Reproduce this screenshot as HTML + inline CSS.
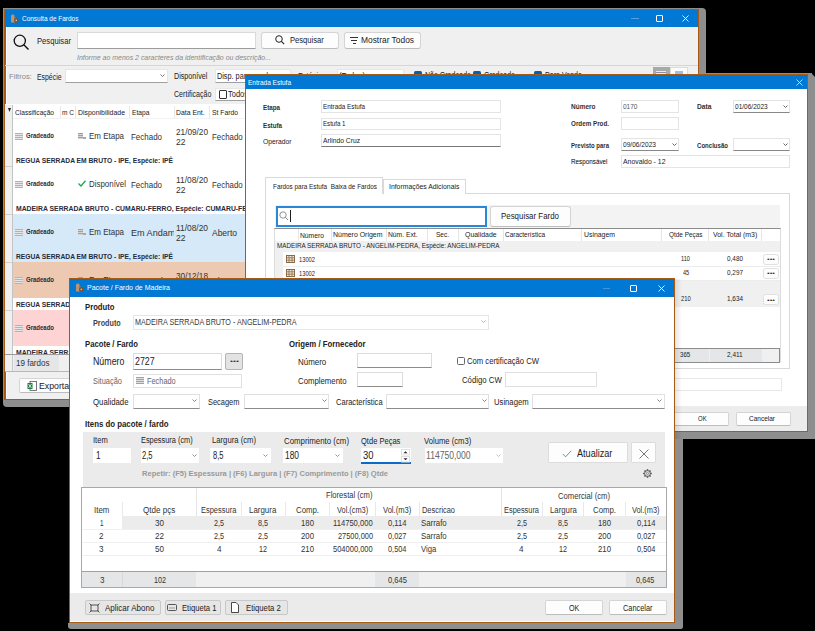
<!DOCTYPE html>
<html><head><meta charset="utf-8">
<style>
*{box-sizing:border-box}
html,body{margin:0;padding:0}
body{width:815px;height:631px;background:#000;position:relative;overflow:hidden;font-family:"Liberation Sans",sans-serif;color:#1a1a1a}
.a{position:absolute}
.t{position:absolute;white-space:nowrap;transform-origin:0 0}
.win{position:absolute;overflow:hidden;border:1px solid #a65a14}
.pc{position:absolute;left:0;top:0;width:815px;height:631px}
.sh{position:absolute;background:#8e8e8e}
.tb{position:absolute;background:#0078d4}
.inp{position:absolute;background:#fff;border:1px solid #e0e0e0;border-bottom-color:#8c8c8c}
.btn{position:absolute;background:#fdfdfd;border:1px solid #d4d4d4;border-bottom-color:#bdbdbd;border-radius:3px}
</style></head><body>

<div class="sh" style="left:699px;top:8px;width:7px;height:399px;border-radius:0 4px 4px 0"></div>
<div class="sh" style="left:3px;top:400px;width:703px;height:7px;border-radius:0 0 4px 4px"></div>
<div class="sh" style="left:3px;top:8px;width:696px;height:1px"></div>
<div class="sh" style="left:3px;top:8px;width:1px;height:392px"></div>
<div class="win" style="left:4px;top:9px;width:695px;height:391px;background:#f0f0f0"><div class="pc" style="left:-5px;top:-10px">
<div class="a" style="left:5px;top:10px;width:693px;height:17px;background:#0078d4"></div>
<div class="a" style="left:5px;top:27px;width:1px;height:372px;background:#8c6038"></div>
<div class="a" style="left:6px;top:27px;width:1px;height:372px;background:#fafcff"></div>
<svg class="a" style="left:10px;top:14px" width="9" height="9" viewBox="0 0 9 9"><path d="M1 8.5 V2 Q1 0.5 2.5 0.5 H3.5 Q4.5 0.5 4.5 2 V8.5 Z" fill="#b89470"></path><rect x="4" y="3" width="1.5" height="5.5" fill="#a07a55"></rect><circle cx="6.3" cy="6.4" r="2.3" fill="#7a5232"></circle><circle cx="6.3" cy="6.4" r="0.8" fill="#d8c0a0"></circle></svg>
<div class="t" style="left: 22.2px; top: 12.5px; font-size: 7.2px; line-height: 12px; height: 12px; --w: 56.4; color: rgb(255, 255, 255); transform: scaleX(0.899); transform-origin: 0px 0px;">Consulta de Fardos</div>
<div class="a" style="left:631px;top:18px;width:8px;height:1px;background:#5a9ede"></div>
<div class="a" style="left:656px;top:15px;width:6.5px;height:6.5px;border:1px solid #fff;border-radius:1px"></div>
<svg class="a" style="left:681.5px;top:14.5px" width="7" height="7" viewBox="0 0 7 7"><path d="M0.5 0.5 L6.5 6.5 M6.5 0.5 L0.5 6.5" stroke="#fff" stroke-width="0.9"></path></svg>
<svg class="a" style="left:13px;top:34px" width="17" height="17" viewBox="0 0 17 17"><circle cx="6.8" cy="6.8" r="5.6" fill="none" stroke="#111" stroke-width="1.3"></circle><line x1="10.8" y1="10.8" x2="15.5" y2="15.5" stroke="#111" stroke-width="1.4"></line></svg>
<div class="t" style="left: 36.9px; top: 34.6px; font-size: 9px; line-height: 12px; height: 12px; --w: 34; color: rgb(34, 34, 34); transform: scaleX(0.8493); transform-origin: 0px 0px;">Pesquisar</div>
<div class="inp" style="left:77px;top:32px;width:179px;height:17px;border-color:#dadada;border-bottom-color:#9c9c9c"></div>
<div class="t" style="left: 77.4px; top: 51.8px; font-size: 8px; line-height: 12px; height: 12px; --w: 194; color: rgb(136, 136, 136); font-style: italic; transform: scaleX(0.8707); transform-origin: 0px 0px;">Informe ao menos 2 caracteres da identificação ou descrição...</div>
<div class="btn" style="left:261px;top:32px;width:78px;height:17px;"></div>
<svg class="a" style="left:275px;top:35px" width="10" height="10" viewBox="0 0 10 10"><circle cx="4" cy="4" r="3.3" fill="none" stroke="#222" stroke-width="1"></circle><line x1="6.4" y1="6.4" x2="9.2" y2="9.2" stroke="#222" stroke-width="1.1"></line></svg>
<div class="t" style="left: 289.7px; top: 33.8px; font-size: 9px; line-height: 12px; height: 12px; --w: 33.8; color: rgb(34, 34, 34); transform: scaleX(0.8443); transform-origin: 0px 0px;">Pesquisar</div>
<div class="btn" style="left:344px;top:32px;width:77px;height:17px;"></div>
<div class="a" style="left:350px;top:37px;width:8px;height:1px;background:#333"></div>
<div class="a" style="left:351px;top:40px;width:6px;height:1px;background:#333"></div>
<div class="a" style="left:353px;top:43px;width:3px;height:1px;background:#333"></div>
<div class="t" style="left: 360.8px; top: 33.8px; font-size: 9px; line-height: 12px; height: 12px; --w: 53; color: rgb(34, 34, 34); transform: scaleX(0.9321); transform-origin: 0px 0px;">Mostrar Todos</div>
<div class="a" style="left:5px;top:65px;width:693px;height:1px;background:#d6d6d6"></div>
<div class="t" style="left: 8.6px; top: 70.9px; font-size: 8px; line-height: 12px; height: 12px; --w: 23; color: rgb(138, 138, 138); transform: scaleX(0.9583); transform-origin: 0px 0px;">Filtros:</div>
<div class="t" style="left: 36.8px; top: 70.9px; font-size: 8.5px; line-height: 12px; height: 12px; --w: 24.5; color: rgb(34, 34, 34); transform: scaleX(0.8099); transform-origin: 0px 0px;">Espécie</div>
<div class="inp" style="left:65px;top:69px;width:103px;height:14px;border-color:#e6e6e6;border-bottom-color:#a0a0a0"></div>
<svg class="a" style="left:159.5px;top:74.0px" width="5" height="4.0" viewBox="0 0 5 4.0"><path d="M0.5 0.5 L2.5 2.5 L4.5 0.5" fill="none" stroke="#666" stroke-width="0.9"></path></svg>
<div class="t" style="left: 173.6px; top: 70.2px; font-size: 8.5px; line-height: 12px; height: 12px; --w: 33.4; color: rgb(34, 34, 34); transform: scaleX(0.8416); transform-origin: 0px 0px;">Disponível</div>
<div class="inp" style="left:215px;top:69px;width:76px;height:14px;border-color:#e6e6e6;border-bottom-color:#a0a0a0"></div>
<div class="t" style="left: 216.6px; top: 70px; font-size: 8.5px; line-height: 12px; height: 12px; --w: 55; color: rgb(34, 34, 34); transform: scaleX(0.8558); transform-origin: 0px 0px;">Disp. para venda</div>
<div class="t" style="left: 298px; top: 70px; font-size: 8.5px; line-height: 12px; height: 12px; --w: 24; color: rgb(34, 34, 34); transform: scaleX(0.8463); transform-origin: 0px 0px;">Estágio</div>
<div class="inp" style="left:337px;top:69px;width:67px;height:14px;border-color:#e6e6e6;border-bottom-color:#a0a0a0"></div>
<div class="t" style="left: 339px; top: 70px; font-size: 8.5px; line-height: 12px; height: 12px; --w: 26; color: rgb(34, 34, 34); transform: scaleX(0.9173); transform-origin: 0px 0px;">(Todos)</div>
<div class="a" style="left:414px;top:71px;width:8px;height:8px;background:#0060b8;border-radius:1.5px"></div>
<div class="t" style="left: 425px; top: 69px; font-size: 8.5px; line-height: 12px; height: 12px; --w: 46; color: rgb(34, 34, 34); transform: scaleX(0.8249); transform-origin: 0px 0px;">Não Gradeado</div>
<div class="a" style="left:473px;top:71px;width:8px;height:8px;background:#0060b8;border-radius:1.5px"></div>
<div class="t" style="left: 484px; top: 69px; font-size: 8.5px; line-height: 12px; height: 12px; --w: 31; color: rgb(34, 34, 34); transform: scaleX(0.8198); transform-origin: 0px 0px;">Gradeado</div>
<div class="a" style="left:534px;top:71px;width:8px;height:8px;background:#0060b8;border-radius:1.5px"></div>
<div class="t" style="left: 545px; top: 69px; font-size: 8.5px; line-height: 12px; height: 12px; --w: 37; color: rgb(34, 34, 34); transform: scaleX(0.8326); transform-origin: 0px 0px;">Para Venda</div>
<div class="a" style="left:653px;top:67px;width:17px;height:17px;background:#a9a9a9"></div>
<div class="a" style="left:656px;top:71px;width:10px;height:8px;background:repeating-linear-gradient(180deg,#e8e8f0 0 1px,#8890a8 1px 2px)"></div>
<div class="a" style="left:670px;top:67px;width:18px;height:17px;background:#fbfbfb;border:1px solid #dcdcdc"></div>
<div class="a" style="left:675px;top:71px;width:8px;height:8px;background:#9cc0e8"></div>
<div class="t" style="left: 173.6px; top: 88.4px; font-size: 8.5px; line-height: 12px; height: 12px; --w: 37.4; color: rgb(34, 34, 34); transform: scaleX(0.8331); transform-origin: 0px 0px;">Certificação</div>
<div class="inp" style="left:215px;top:88px;width:65px;height:13px;border-color:#e6e6e6;border-bottom-color:#a0a0a0"></div>
<div class="a" style="left:219px;top:90px;width:8px;height:9px;border:1px solid #333;border-radius:1px;background:#fff"></div>
<div class="t" style="left: 228.2px; top: 88.4px; font-size: 8.5px; line-height: 12px; height: 12px; --w: 20; color: rgb(34, 34, 34); transform: scaleX(0.8815); transform-origin: 0px 0px;">Todos</div>
<div class="a" style="left:5px;top:104px;width:693px;height:250px;background:#fff"></div>
<div class="a" style="left:5px;top:105px;width:7px;height:249px;background:#f0f0f0"></div>
<div class="a" style="left:12px;top:105px;width:1px;height:249px;background:#c4c4c4"></div>
<div class="a" style="left:60px;top:106px;width:1px;height:12px;background:#e8e8e8"></div>
<div class="a" style="left:75px;top:106px;width:1px;height:12px;background:#e8e8e8"></div>
<div class="a" style="left:129px;top:106px;width:1px;height:12px;background:#e8e8e8"></div>
<div class="a" style="left:174px;top:106px;width:1px;height:12px;background:#e8e8e8"></div>
<div class="a" style="left:209px;top:106px;width:1px;height:12px;background:#e8e8e8"></div>
<div class="a" style="left:13px;top:118px;width:685px;height:1px;background:#f2f2f2"></div>
<svg class="a" style="left:8px;top:108px" width="3" height="5" viewBox="0 0 3 5"><path d="M0 0 H3 L1.5 4 Z" fill="#222"></path></svg>
<div class="t" style="left: 14.6px; top: 106.6px; font-size: 7.5px; line-height: 12px; height: 12px; --w: 39; color: rgb(26, 26, 42); transform: scaleX(0.8826); transform-origin: 0px 0px;">Classificação</div>
<div class="t" style="left: 61.7px; top: 106.6px; font-size: 7.5px; line-height: 12px; height: 12px; --w: 12; color: rgb(26, 26, 42); transform: scaleX(0.8727); transform-origin: 0px 0px;">m C</div>
<div class="t" style="left: 77.6px; top: 106.6px; font-size: 7.5px; line-height: 12px; height: 12px; --w: 47; color: rgb(26, 26, 42); transform: scaleX(0.9238); transform-origin: 0px 0px;">Disponibilidade</div>
<div class="t" style="left: 132px; top: 106.6px; font-size: 7.5px; line-height: 12px; height: 12px; --w: 17.4; color: rgb(26, 26, 42); transform: scaleX(0.8873); transform-origin: 0px 0px;">Etapa</div>
<div class="t" style="left: 176.4px; top: 106.6px; font-size: 7.5px; line-height: 12px; height: 12px; --w: 28.6; color: rgb(26, 26, 42); transform: scaleX(0.9143); transform-origin: 0px 0px;">Data Ent.</div>
<div class="t" style="left: 211.7px; top: 106.6px; font-size: 7.5px; line-height: 12px; height: 12px; --w: 26; color: rgb(26, 26, 42); transform: scaleX(0.9039); transform-origin: 0px 0px;">St Fardo</div>
<div class="a" style="left:5px;top:166px;width:7px;height:1px;background:#d0d0d0"></div>
<div class="a" style="left:15px;top:133px;width:8px;height:7px;background:repeating-linear-gradient(180deg,#b4b4b4 0 1px,#e4e4e4 1px 2px)"></div>
<div class="t" style="left: 26px; top: 130.3px; font-size: 7.3px; line-height: 12px; height: 12px; --w: 28; font-weight: bold; color: rgb(42, 42, 58); transform: scaleX(0.822); transform-origin: 0px 0px;">Gradeado</div>
<div class="a" style="left:78px;top:133px;width:5px;height:6px;background:repeating-linear-gradient(180deg,#a0a0a0 0 1px,#d4d4d4 1px 2px)"></div>
<div class="a" style="left:83px;top:137px;width:3px;height:2px;background:#a8a8a8"></div>
<div class="t" style="left: 89px; top: 130.4px; font-size: 9px; line-height: 12px; height: 12px; --w: 35; color: rgb(51, 51, 51); transform: scaleX(0.8854); transform-origin: 0px 0px;">Em Etapa</div>
<div class="a" style="left:131px;top:129px;width:43px;height:14px;overflow:hidden">
<div class="t" style="left: 0px; top: 1.5px; font-size: 9px; line-height: 12px; height: 12px; --w: 31; color: rgb(51, 51, 51); transform: scaleX(0.8849); transform-origin: 0px 0px;">Fechado</div>
</div>
<div class="t" style="left: 175.8px; top: 125.5px; font-size: 9px; line-height: 12px; height: 12px; --w: 32; color: rgb(51, 51, 51); transform: scaleX(0.9131); transform-origin: 0px 0px;">21/09/20</div>
<div class="t" style="left: 175.8px; top: 136px; font-size: 9px; line-height: 12px; height: 12px; --w: 9.5; color: rgb(51, 51, 51); transform: scaleX(0.9485); transform-origin: 0px 0px;">22</div>
<div class="t" style="left: 211.6px; top: 130.5px; font-size: 9px; line-height: 12px; height: 12px; --w: 30.7; color: rgb(51, 51, 51); transform: scaleX(0.8764); transform-origin: 0px 0px;">Fechado</div>
<div class="t" style="left: 16px; top: 154.7px; font-size: 7.3px; line-height: 12px; height: 12px; --w: 157; font-weight: bold; color: rgb(42, 42, 58); transform: scaleX(0.919); transform-origin: 0px 0px;">REGUA SERRADA EM BRUTO - IPE, Espécie: IPÊ</div>
<div class="a" style="left:5px;top:214px;width:7px;height:1px;background:#d0d0d0"></div>
<div class="a" style="left:15px;top:181px;width:8px;height:7px;background:repeating-linear-gradient(180deg,#b4b4b4 0 1px,#e4e4e4 1px 2px)"></div>
<div class="t" style="left: 26px; top: 178.3px; font-size: 7.3px; line-height: 12px; height: 12px; --w: 28; font-weight: bold; color: rgb(42, 42, 58); transform: scaleX(0.822); transform-origin: 0px 0px;">Gradeado</div>
<svg class="a" style="left:78px;top:180px" width="8" height="7" viewBox="0 0 8 7"><path d="M0.5 3.5 L3 6 L7.5 0.8" fill="none" stroke="#1aa84a" stroke-width="1.3"></path></svg>
<div class="t" style="left: 89px; top: 178.4px; font-size: 9px; line-height: 12px; height: 12px; --w: 37; color: rgb(51, 51, 51); transform: scaleX(0.8803); transform-origin: 0px 0px;">Disponível</div>
<div class="a" style="left:131px;top:177px;width:43px;height:14px;overflow:hidden">
<div class="t" style="left: 0px; top: 1.5px; font-size: 9px; line-height: 12px; height: 12px; --w: 31; color: rgb(51, 51, 51); transform: scaleX(0.8849); transform-origin: 0px 0px;">Fechado</div>
</div>
<div class="t" style="left: 175.8px; top: 173.5px; font-size: 9px; line-height: 12px; height: 12px; --w: 32; color: rgb(51, 51, 51); transform: scaleX(0.9309); transform-origin: 0px 0px;">11/08/20</div>
<div class="t" style="left: 175.8px; top: 184px; font-size: 9px; line-height: 12px; height: 12px; --w: 9.5; color: rgb(51, 51, 51); transform: scaleX(0.9485); transform-origin: 0px 0px;">22</div>
<div class="t" style="left: 211.6px; top: 178.5px; font-size: 9px; line-height: 12px; height: 12px; --w: 30.7; color: rgb(51, 51, 51); transform: scaleX(0.8764); transform-origin: 0px 0px;">Fechado</div>
<div class="t" style="left: 16px; top: 202.7px; font-size: 7.3px; line-height: 12px; height: 12px; --w: 246; font-weight: bold; color: rgb(42, 42, 58); transform: scaleX(0.936); transform-origin: 0px 0px;">MADEIRA SERRADA BRUTO - CUMARU-FERRO, Espécie: CUMARU-FERRO</div>
<div class="a" style="left:13px;top:214px;width:685px;height:48px;background:#d5e9f8"></div>
<div class="a" style="left:5px;top:262px;width:7px;height:1px;background:#d0d0d0"></div>
<div class="a" style="left:15px;top:229px;width:8px;height:7px;background:repeating-linear-gradient(180deg,#b4b4b4 0 1px,#e4e4e4 1px 2px)"></div>
<div class="t" style="left: 26px; top: 226.3px; font-size: 7.3px; line-height: 12px; height: 12px; --w: 28; font-weight: bold; color: rgb(42, 42, 58); transform: scaleX(0.822); transform-origin: 0px 0px;">Gradeado</div>
<div class="a" style="left:78px;top:229px;width:5px;height:6px;background:repeating-linear-gradient(180deg,#a0a0a0 0 1px,#d4d4d4 1px 2px)"></div>
<div class="a" style="left:83px;top:233px;width:3px;height:2px;background:#a8a8a8"></div>
<div class="t" style="left: 89px; top: 226.4px; font-size: 9px; line-height: 12px; height: 12px; --w: 35; color: rgb(51, 51, 51); transform: scaleX(0.8854); transform-origin: 0px 0px;">Em Etapa</div>
<div class="a" style="left:131px;top:225px;width:43px;height:14px;overflow:hidden">
<div class="t" style="left: 0px; top: 1.5px; font-size: 9px; line-height: 12px; height: 12px; --w: 62; color: rgb(51, 51, 51); transform: scaleX(1.0074); transform-origin: 0px 0px;">Em Andamento</div>
</div>
<div class="t" style="left: 175.8px; top: 221.5px; font-size: 9px; line-height: 12px; height: 12px; --w: 32; color: rgb(51, 51, 51); transform: scaleX(0.9309); transform-origin: 0px 0px;">11/08/20</div>
<div class="t" style="left: 175.8px; top: 232px; font-size: 9px; line-height: 12px; height: 12px; --w: 9.5; color: rgb(51, 51, 51); transform: scaleX(0.9485); transform-origin: 0px 0px;">22</div>
<div class="t" style="left: 211.6px; top: 226.5px; font-size: 9px; line-height: 12px; height: 12px; --w: 25; color: rgb(51, 51, 51); transform: scaleX(0.9423); transform-origin: 0px 0px;">Aberto</div>
<div class="t" style="left: 16px; top: 250.7px; font-size: 7.3px; line-height: 12px; height: 12px; --w: 157; font-weight: bold; color: rgb(42, 42, 58); transform: scaleX(0.919); transform-origin: 0px 0px;">REGUA SERRADA EM BRUTO - IPE, Espécie: IPÊ</div>
<div class="a" style="left:13px;top:262px;width:685px;height:36px;background:#edc9b2"></div>
<div class="a" style="left:5px;top:310px;width:7px;height:1px;background:#d0d0d0"></div>
<div class="a" style="left:15px;top:277px;width:8px;height:7px;background:repeating-linear-gradient(180deg,#b4b4b4 0 1px,#e4e4e4 1px 2px)"></div>
<div class="t" style="left: 26px; top: 274.3px; font-size: 7.3px; line-height: 12px; height: 12px; --w: 28; font-weight: bold; color: rgb(42, 42, 58); transform: scaleX(0.822); transform-origin: 0px 0px;">Gradeado</div>
<div class="a" style="left:78px;top:277px;width:5px;height:6px;background:repeating-linear-gradient(180deg,#a0a0a0 0 1px,#d4d4d4 1px 2px)"></div>
<div class="a" style="left:83px;top:281px;width:3px;height:2px;background:#a8a8a8"></div>
<div class="t" style="left: 89px; top: 274.4px; font-size: 9px; line-height: 12px; height: 12px; --w: 35; color: rgb(51, 51, 51); transform: scaleX(0.8854); transform-origin: 0px 0px;">Em Etapa</div>
<div class="a" style="left:131px;top:273px;width:43px;height:14px;overflow:hidden">
<div class="t" style="left: 0px; top: 1.5px; font-size: 9px; line-height: 12px; height: 12px; --w: 62; color: rgb(51, 51, 51); transform: scaleX(1.0074); transform-origin: 0px 0px;">Em Andamento</div>
</div>
<div class="t" style="left: 175.8px; top: 269.5px; font-size: 9px; line-height: 12px; height: 12px; --w: 32; color: rgb(51, 51, 51); transform: scaleX(0.9131); transform-origin: 0px 0px;">30/12/18</div>
<div class="t" style="left: 175.8px; top: 280px; font-size: 9px; line-height: 12px; height: 12px; --w: 9.5; color: rgb(51, 51, 51); transform: scaleX(0.9485); transform-origin: 0px 0px;">22</div>
<div class="t" style="left: 211.6px; top: 274.5px; font-size: 9px; line-height: 12px; height: 12px; --w: 25; color: rgb(51, 51, 51); transform: scaleX(0.9423); transform-origin: 0px 0px;">Aberto</div>
<div class="t" style="left: 16px; top: 298.7px; font-size: 7.3px; line-height: 12px; height: 12px; --w: 157; font-weight: bold; color: rgb(42, 42, 58); transform: scaleX(0.919); transform-origin: 0px 0px;">REGUA SERRADA EM BRUTO - IPE, Espécie: IPÊ</div>
<div class="a" style="left:13px;top:310px;width:685px;height:36px;background:#fdd3d3"></div>
<div class="a" style="left:5px;top:358px;width:7px;height:1px;background:#d0d0d0"></div>
<div class="a" style="left:15px;top:325px;width:8px;height:7px;background:repeating-linear-gradient(180deg,#b4b4b4 0 1px,#e4e4e4 1px 2px)"></div>
<div class="t" style="left: 26px; top: 322.3px; font-size: 7.3px; line-height: 12px; height: 12px; --w: 28; font-weight: bold; color: rgb(42, 42, 58); transform: scaleX(0.822); transform-origin: 0px 0px;">Gradeado</div>
<div class="a" style="left:78px;top:325px;width:5px;height:6px;background:repeating-linear-gradient(180deg,#a0a0a0 0 1px,#d4d4d4 1px 2px)"></div>
<div class="a" style="left:83px;top:329px;width:3px;height:2px;background:#a8a8a8"></div>
<div class="t" style="left: 89px; top: 322.4px; font-size: 9px; line-height: 12px; height: 12px; --w: 35; color: rgb(51, 51, 51); transform: scaleX(0.8854); transform-origin: 0px 0px;">Em Etapa</div>
<div class="a" style="left:131px;top:321px;width:43px;height:14px;overflow:hidden">
<div class="t" style="left: 0px; top: 1.5px; font-size: 9px; line-height: 12px; height: 12px; --w: 62; color: rgb(51, 51, 51); transform: scaleX(1.0074); transform-origin: 0px 0px;">Em Andamento</div>
</div>
<div class="t" style="left: 175.8px; top: 317.5px; font-size: 9px; line-height: 12px; height: 12px; --w: 32; color: rgb(51, 51, 51); transform: scaleX(0.9131); transform-origin: 0px 0px;">30/12/18</div>
<div class="t" style="left: 175.8px; top: 328px; font-size: 9px; line-height: 12px; height: 12px; --w: 9.5; color: rgb(51, 51, 51); transform: scaleX(0.9485); transform-origin: 0px 0px;">22</div>
<div class="t" style="left: 211.6px; top: 322.5px; font-size: 9px; line-height: 12px; height: 12px; --w: 25; color: rgb(51, 51, 51); transform: scaleX(0.9423); transform-origin: 0px 0px;">Aberto</div>
<div class="t" style="left: 16px; top: 346.7px; font-size: 7.3px; line-height: 12px; height: 12px; --w: 246; font-weight: bold; color: rgb(42, 42, 58); transform: scaleX(0.936); transform-origin: 0px 0px;">MADEIRA SERRADA BRUTO - CUMARU-FERRO, Espécie: CUMARU-FERRO</div>
<div class="a" style="left:5px;top:354px;width:693px;height:1px;background:#9a9a9a"></div>
<div class="a" style="left:5px;top:355px;width:693px;height:16px;background:#f0f0f0"></div>
<div class="a" style="left:12px;top:355px;width:1px;height:16px;background:#c8c8c8"></div>
<div class="a" style="left:14px;top:355px;width:45px;height:16px;background:#e4e6e8"></div>
<div class="t" style="left: 15.5px; top: 357.3px; font-size: 8.7px; line-height: 12px; height: 12px; --w: 33.5; color: rgb(51, 51, 51); transform: scaleX(0.9245); transform-origin: 0px 0px;">19 fardos</div>
<div class="a" style="left:5px;top:371px;width:693px;height:1px;background:#b8b8b8"></div>
<div class="btn" style="left:19px;top:378px;width:71px;height:15px;border-radius:2px"></div>
<svg class="a" style="left:27px;top:381px" width="10" height="10" viewBox="0 0 10 10"><rect x="3" y="0.5" width="6.5" height="9" fill="#fff" stroke="#555" stroke-width="0.8"></rect><rect x="0.5" y="2" width="5" height="6" fill="#1d7a45"></rect><path d="M1.5 3 L4.5 7 M4.5 3 L1.5 7" stroke="#fff" stroke-width="0.8"></path></svg>
<div class="t" style="left: 38.5px; top: 379.7px; font-size: 9px; line-height: 12px; height: 12px; --w: 33; color: rgb(26, 26, 42); transform: scaleX(0.9701); transform-origin: 0px 0px;">Exportar</div>
</div></div>
<div class="sh" style="left:808px;top:74px;width:7px;height:365px;clip-path:polygon(0 0,4px 0,7px 3px,7px 100%,0 100%)"></div>
<div class="sh" style="left:706px;top:73px;width:106px;height:1px"></div>
<div class="sh" style="left:244px;top:432px;width:571px;height:7px;border-radius:0 0 3px 0"></div>
<div class="win" style="left:245px;top:74px;width:563px;height:358px;background:#fff"><div class="pc" style="left:-246px;top:-75px">
<div class="a" style="left:246px;top:75px;width:561px;height:14px;background:#0078d4"></div>
<div class="t" style="left: 247.6px; top: 76.5px; font-size: 8px; line-height: 12px; height: 12px; --w: 43; color: rgb(255, 255, 255); transform: scaleX(0.8125); transform-origin: 0px 0px;">Entrada Estufa</div>
<svg class="a" style="left:795.5px;top:78.8px" width="7" height="7" viewBox="0 0 7 7"><path d="M0.5 0.5 L6.5 6.5 M6.5 0.5 L0.5 6.5" stroke="#e8f0fa" stroke-width="0.8"></path></svg>
<div class="t" style="left: 263px; top: 101.6px; font-size: 7.5px; line-height: 12px; height: 12px; --w: 17; font-weight: bold; color: rgb(48, 48, 48); transform: scaleX(0.8318); transform-origin: 0px 0px;">Etapa</div>
<div class="t" style="left: 263px; top: 119.8px; font-size: 7.5px; line-height: 12px; height: 12px; --w: 19; font-weight: bold; color: rgb(48, 48, 48); transform: scaleX(0.8289); transform-origin: 0px 0px;">Estufa</div>
<div class="t" style="left: 263px; top: 135.8px; font-size: 7.5px; line-height: 12px; height: 12px; --w: 28.5; color: rgb(26, 26, 26); transform: scaleX(0.8994); transform-origin: 0px 0px;">Operador</div>
<div class="inp" style="left:321px;top:100px;width:180px;height:13px;border-color:#e4e4e4;border-bottom-color:#e4e4e4"></div>
<div class="t" style="left: 323px; top: 100.5px; font-size: 7.5px; line-height: 12px; height: 12px; --w: 42; color: rgb(26, 26, 26); transform: scaleX(0.8463); transform-origin: 0px 0px;">Entrada Estufa</div>
<div class="inp" style="left:321px;top:118px;width:180px;height:12px;border-color:#e4e4e4;border-bottom-color:#e4e4e4"></div>
<div class="t" style="left: 323px; top: 118px; font-size: 7.5px; line-height: 12px; height: 12px; --w: 22.5; color: rgb(26, 26, 26); transform: scaleX(0.8173); transform-origin: 0px 0px;">Estufa 1</div>
<div class="inp" style="left:321px;top:134px;width:180px;height:13px;border-color:#e4e4e4;border-bottom-color:#777"></div>
<div class="t" style="left: 323px; top: 134.5px; font-size: 7.5px; line-height: 12px; height: 12px; --w: 37; color: rgb(26, 26, 26); transform: scaleX(0.8966); transform-origin: 0px 0px;">Arlindo Cruz</div>
<div class="t" style="left: 571px; top: 101.2px; font-size: 7.5px; line-height: 12px; height: 12px; --w: 24.5; font-weight: bold; color: rgb(48, 48, 48); transform: scaleX(0.8644); transform-origin: 0px 0px;">Número</div>
<div class="inp" style="left:621px;top:100px;width:58px;height:13px;border-color:#e4e4e4;border-bottom-color:#e4e4e4"></div>
<div class="t" style="left: 623px; top: 101.2px; font-size: 7.5px; line-height: 12px; height: 12px; --w: 14.5; color: rgb(85, 85, 85); transform: scaleX(0.8689); transform-origin: 0px 0px;">0170</div>
<div class="t" style="left: 697px; top: 101.2px; font-size: 7.5px; line-height: 12px; height: 12px; --w: 14.5; font-weight: bold; color: rgb(48, 48, 48); transform: scaleX(0.8915); transform-origin: 0px 0px;">Data</div>
<div class="inp" style="left:733px;top:100px;width:57px;height:13px;border-color:#e4e4e4;border-bottom-color:#888"></div>
<div class="t" style="left: 735px; top: 101.2px; font-size: 7.5px; line-height: 12px; height: 12px; --w: 32.7; color: rgb(26, 26, 26); transform: scaleX(0.8709); transform-origin: 0px 0px;">01/06/2023</div>
<svg class="a" style="left:782.5px;top:105.0px" width="5" height="4.0" viewBox="0 0 5 4.0"><path d="M0.5 0.5 L2.5 2.5 L4.5 0.5" fill="none" stroke="#555" stroke-width="0.9"></path></svg>
<div class="t" style="left: 571px; top: 117.8px; font-size: 7.5px; line-height: 12px; height: 12px; --w: 38; font-weight: bold; color: rgb(48, 48, 48); transform: scaleX(0.8363); transform-origin: 0px 0px;">Ordem Prod.</div>
<div class="inp" style="left:621px;top:117px;width:58px;height:13px;border-color:#e4e4e4;border-bottom-color:#e4e4e4"></div>
<div class="t" style="left: 571px; top: 140px; font-size: 7.5px; line-height: 12px; height: 12px; --w: 38; font-weight: bold; color: rgb(48, 48, 48); transform: scaleX(0.7995); transform-origin: 0px 0px;">Previsto para</div>
<div class="inp" style="left:621px;top:138px;width:58px;height:13px;border-color:#e4e4e4;border-bottom-color:#888"></div>
<div class="t" style="left: 623px; top: 139.3px; font-size: 7.5px; line-height: 12px; height: 12px; --w: 33; color: rgb(26, 26, 26); transform: scaleX(0.8789); transform-origin: 0px 0px;">09/06/2023</div>
<svg class="a" style="left:671.5px;top:143.0px" width="5" height="4.0" viewBox="0 0 5 4.0"><path d="M0.5 0.5 L2.5 2.5 L4.5 0.5" fill="none" stroke="#555" stroke-width="0.9"></path></svg>
<div class="t" style="left: 697px; top: 139.8px; font-size: 7.5px; line-height: 12px; height: 12px; --w: 31; font-weight: bold; color: rgb(48, 48, 48); transform: scaleX(0.8085); transform-origin: 0px 0px;">Conclusão</div>
<div class="inp" style="left:733px;top:138px;width:57px;height:13px;border-color:#e4e4e4;border-bottom-color:#888"></div>
<svg class="a" style="left:782.5px;top:143.0px" width="5" height="4.0" viewBox="0 0 5 4.0"><path d="M0.5 0.5 L2.5 2.5 L4.5 0.5" fill="none" stroke="#555" stroke-width="0.9"></path></svg>
<div class="t" style="left: 571px; top: 155.8px; font-size: 7.5px; line-height: 12px; height: 12px; --w: 36.5; color: rgb(0, 0, 0); transform: scaleX(0.8418); transform-origin: 0px 0px;">Responsável</div>
<div class="inp" style="left:621px;top:155px;width:169px;height:13px;border-color:#e4e4e4;border-bottom-color:#e4e4e4"></div>
<div class="t" style="left: 623px; top: 156px; font-size: 7.5px; line-height: 12px; height: 12px; --w: 42.5; color: rgb(26, 26, 26); transform: scaleX(0.918); transform-origin: 0px 0px;">Anovaldo - 12</div>
<div class="a" style="left:265px;top:193px;width:525px;height:176px;border:1px solid #d9d9d9;background:#fff"></div>
<div class="a" style="left:383px;top:179px;width:83px;height:15px;border:1px solid #d9d9d9;border-bottom:none;background:#fff"></div>
<div class="a" style="left:265px;top:177px;width:118px;height:17px;border:1px solid #d9d9d9;border-bottom:none;background:#fff"></div>
<div class="t" style="left: 272.7px; top: 180.5px; font-size: 7.5px; line-height: 12px; height: 12px; --w: 104; color: rgb(26, 26, 26); transform: scaleX(0.8484); transform-origin: 0px 0px;">Fardos para Estufa&nbsp; Baixa de Fardos</div>
<div class="t" style="left: 388.9px; top: 181.2px; font-size: 7.5px; line-height: 12px; height: 12px; --w: 70.4; color: rgb(26, 26, 26); transform: scaleX(0.9128); transform-origin: 0px 0px;">Informações Adicionais</div>
<div class="a" style="left:275px;top:205px;width:505px;height:23px;background:#f3f3f3"></div>
<div class="a" style="left:276px;top:206px;width:211px;height:21px;border:2px solid #2a86d6;background:#fff"></div>
<svg class="a" style="left:279px;top:211px" width="10" height="10" viewBox="0 0 10 10"><circle cx="4" cy="4" r="3.2" fill="none" stroke="#888" stroke-width="0.9"></circle><line x1="6.3" y1="6.3" x2="9" y2="9" stroke="#888" stroke-width="1"></line></svg>
<div class="a" style="left:290px;top:210px;width:1px;height:12px;background:#222"></div>
<div class="btn" style="left:490px;top:206px;width:81px;height:21px;"></div>
<div class="t" style="left: 501.4px; top: 210.4px; font-size: 9.5px; line-height: 12px; height: 12px; --w: 58; color: rgb(26, 26, 26); transform: scaleX(0.8321); transform-origin: 0px 0px;">Pesquisar Fardo</div>
<div class="a" style="left:274px;top:228px;width:507px;height:134px;border:1px solid #dcdcdc;border-top-color:#8c8c8c;background:#fff"></div>
<div class="a" style="left:297.8px;top:229px;width:1px;height:12px;background:#e6e6e6"></div>
<div class="a" style="left:330.7px;top:229px;width:1px;height:12px;background:#e6e6e6"></div>
<div class="a" style="left:385.6px;top:229px;width:1px;height:12px;background:#e6e6e6"></div>
<div class="a" style="left:426.7px;top:229px;width:1px;height:12px;background:#e6e6e6"></div>
<div class="a" style="left:457.6px;top:229px;width:1px;height:12px;background:#e6e6e6"></div>
<div class="a" style="left:502.5px;top:229px;width:1px;height:12px;background:#e6e6e6"></div>
<div class="a" style="left:580.7px;top:229px;width:1px;height:12px;background:#e6e6e6"></div>
<div class="a" style="left:661.4px;top:229px;width:1px;height:12px;background:#e6e6e6"></div>
<div class="a" style="left:708.4px;top:229px;width:1px;height:12px;background:#e6e6e6"></div>
<div class="a" style="left:761px;top:229px;width:1px;height:12px;background:#e6e6e6"></div>
<div class="t" style="left: 300px; top: 229.8px; font-size: 7.5px; line-height: 12px; height: 12px; --w: 24; color: rgb(34, 34, 34); transform: scaleX(0.8993); transform-origin: 0px 0px;">Número</div>
<div class="t" style="left: 332.8px; top: 229px; font-size: 7.5px; line-height: 12px; height: 12px; --w: 49.5; color: rgb(34, 34, 34); transform: scaleX(0.9277); transform-origin: 0px 0px;">Número Origem</div>
<div class="t" style="left: 388px; top: 229px; font-size: 7.5px; line-height: 12px; height: 12px; --w: 29.6; color: rgb(34, 34, 34); transform: scaleX(0.8987); transform-origin: 0px 0px;">Núm. Ext.</div>
<div class="t" style="left: 436px; top: 229px; font-size: 7.5px; line-height: 12px; height: 12px; --w: 13; color: rgb(34, 34, 34); transform: scaleX(0.8658); transform-origin: 0px 0px;">Sec.</div>
<div class="t" style="left: 464.8px; top: 229px; font-size: 7.5px; line-height: 12px; height: 12px; --w: 31.6; color: rgb(34, 34, 34); transform: scaleX(0.9239); transform-origin: 0px 0px;">Qualidade</div>
<div class="t" style="left: 504.7px; top: 229px; font-size: 7.5px; line-height: 12px; height: 12px; --w: 40; color: rgb(34, 34, 34); transform: scaleX(0.8646); transform-origin: 0px 0px;">Característica</div>
<div class="t" style="left: 583.6px; top: 229px; font-size: 7.5px; line-height: 12px; height: 12px; --w: 31; color: rgb(34, 34, 34); transform: scaleX(0.9181); transform-origin: 0px 0px;">Usinagem</div>
<div class="t" style="left: 668.6px; top: 229px; font-size: 7.5px; line-height: 12px; height: 12px; --w: 33.4; color: rgb(34, 34, 34); transform: scaleX(0.852); transform-origin: 0px 0px;">Qtde Peças</div>
<div class="t" style="left: 712.7px; top: 229px; font-size: 7.5px; line-height: 12px; height: 12px; --w: 44.3; color: rgb(34, 34, 34); transform: scaleX(0.9265); transform-origin: 0px 0px;">Vol. Total (m3)</div>
<div class="a" style="left:275px;top:241px;width:505px;height:11px;background:#f0f0f0"></div>
<div class="t" style="left: 277px; top: 240.3px; font-size: 7.5px; line-height: 12px; height: 12px; --w: 222.5; color: rgb(34, 34, 34); transform: scaleX(0.8398); transform-origin: 0px 0px;">MADEIRA SERRADA BRUTO - ANGELIM-PEDRA, Espécie: ANGELIM-PEDRA</div>
<div class="a" style="left:275px;top:252px;width:8px;height:15px;background:#f0f0f0"></div>
<div class="a" style="left:283px;top:266px;width:497px;height:1px;background:#ececec"></div>
<svg class="a" style="left:286px;top:255px" width="9" height="8" viewBox="0 0 9 8"><rect x="0.5" y="0.5" width="8" height="7" fill="#efe6da" stroke="#8b6a4a" stroke-width="1"></rect><path d="M0.5 2.8 H8.5 M0.5 5.2 H8.5 M3 0.5 V7.5 M6 0.5 V7.5" stroke="#8b6a4a" stroke-width="0.8"></path></svg>
<div class="t" style="left: 299px; top: 253.5px; font-size: 8px; line-height: 12px; height: 12px; --w: 16; color: rgb(42, 26, 58); transform: scaleX(0.7191); transform-origin: 0px 0px;">13002</div>
<div class="t" style="left: 680.6px; top: 253px; font-size: 7.5px; line-height: 12px; height: 12px; --w: 9; color: rgb(34, 34, 34); transform: scaleX(0.752); transform-origin: 0px 0px;">110</div>
<div class="t" style="left: 727.4px; top: 253px; font-size: 7.5px; line-height: 12px; height: 12px; --w: 16; color: rgb(34, 34, 34); transform: scaleX(0.8519); transform-origin: 0px 0px;">0,480</div>
<div class="btn" style="left:762.5px;top:253.5px;width:16.0px;height:11.5px;border-radius:2.5px;border-color:#e0e0e0"></div>
<div class="t" style="left: 766.5px; top: 253px; font-size: 5px; line-height: 12px; height: 12px; --w: 8; color: rgb(51, 51, 51); transform: scaleX(1.5193); transform-origin: 0px 0px;">•••</div>
<div class="a" style="left:275px;top:266px;width:8px;height:15px;background:#f0f0f0"></div>
<div class="a" style="left:283px;top:280px;width:497px;height:1px;background:#ececec"></div>
<svg class="a" style="left:286px;top:269px" width="9" height="8" viewBox="0 0 9 8"><rect x="0.5" y="0.5" width="8" height="7" fill="#efe6da" stroke="#8b6a4a" stroke-width="1"></rect><path d="M0.5 2.8 H8.5 M0.5 5.2 H8.5 M3 0.5 V7.5 M6 0.5 V7.5" stroke="#8b6a4a" stroke-width="0.8"></path></svg>
<div class="t" style="left: 299px; top: 267.5px; font-size: 8px; line-height: 12px; height: 12px; --w: 16; color: rgb(42, 26, 58); transform: scaleX(0.7191); transform-origin: 0px 0px;">13002</div>
<div class="t" style="left: 683.4px; top: 267px; font-size: 7.5px; line-height: 12px; height: 12px; --w: 6.2; color: rgb(34, 34, 34); transform: scaleX(0.7431); transform-origin: 0px 0px;">45</div>
<div class="t" style="left: 727.4px; top: 267px; font-size: 7.5px; line-height: 12px; height: 12px; --w: 16; color: rgb(34, 34, 34); transform: scaleX(0.8519); transform-origin: 0px 0px;">0,297</div>
<div class="btn" style="left:762.5px;top:267.5px;width:16.0px;height:11.5px;border-radius:2.5px;border-color:#e0e0e0"></div>
<div class="t" style="left: 766.5px; top: 267px; font-size: 5px; line-height: 12px; height: 12px; --w: 8; color: rgb(51, 51, 51); transform: scaleX(1.5193); transform-origin: 0px 0px;">•••</div>
<div class="a" style="left:275px;top:281px;width:505px;height:26px;background:#f0f0f0"></div>
<div class="t" style="left: 680.6px; top: 293px; font-size: 7.5px; line-height: 12px; height: 12px; --w: 9.8; color: rgb(34, 34, 34); transform: scaleX(0.783); transform-origin: 0px 0px;">210</div>
<div class="t" style="left: 727.4px; top: 293px; font-size: 7.5px; line-height: 12px; height: 12px; --w: 16; color: rgb(34, 34, 34); transform: scaleX(0.8519); transform-origin: 0px 0px;">1,634</div>
<div class="btn" style="left:762.5px;top:293.5px;width:16.0px;height:11.5px;border-radius:2.5px;border-color:#e0e0e0"></div>
<div class="t" style="left: 766.5px; top: 293.5px; font-size: 5px; line-height: 12px; height: 12px; --w: 8; color: rgb(51, 51, 51); transform: scaleX(1.5193); transform-origin: 0px 0px;">•••</div>
<div class="a" style="left:275px;top:348px;width:505px;height:15px;background:#f0f0f0;border-top:1px solid #8c8c8c;border-right:1px solid #8c8c8c;border-bottom:1px solid #8c8c8c"></div>
<div class="a" style="left:662px;top:349px;width:47px;height:13px;background:#e4e6e8"></div>
<div class="a" style="left:709.5px;top:349px;width:52px;height:13px;background:#e4e6e8"></div>
<div class="t" style="left: 679.8px; top: 349px; font-size: 7.5px; line-height: 12px; height: 12px; --w: 10.2; color: rgb(34, 34, 34); transform: scaleX(0.815); transform-origin: 0px 0px;">365</div>
<div class="t" style="left: 727.3px; top: 349px; font-size: 7.5px; line-height: 12px; height: 12px; --w: 15.7; color: rgb(34, 34, 34); transform: scaleX(0.8617); transform-origin: 0px 0px;">2,411</div>
<div class="inp" style="left:266px;top:378px;width:516px;height:13px;border-color:#e8e8e8;border-bottom-color:#e8e8e8"></div>
<div class="a" style="left:246px;top:406px;width:561px;height:25px;background:#ececec"></div>
<div class="btn" style="left:672px;top:412px;width:57px;height:14px;border-radius:2px"></div>
<div class="t" style="left: 697.6px; top: 413px; font-size: 7.5px; line-height: 12px; height: 12px; --w: 8.6; color: rgb(26, 26, 26); transform: scaleX(0.7931); transform-origin: 0px 0px;">OK</div>
<div class="btn" style="left:735.5px;top:412px;width:55.0px;height:14px;border-radius:2px"></div>
<div class="t" style="left: 749.3px; top: 413px; font-size: 7.5px; line-height: 12px; height: 12px; --w: 26; color: rgb(26, 26, 26); transform: scaleX(0.8662); transform-origin: 0px 0px;">Cancelar</div>
</div></div>
<div class="a" style="left:675px;top:279px;width:8px;height:160px;background:linear-gradient(90deg,rgba(0,0,0,0.10),rgba(0,0,0,0) 7px)"></div>
<div class="sh" style="left:675px;top:439px;width:8px;height:190px;border-radius:0 0 3px 0"></div>
<div class="sh" style="left:68px;top:623px;width:615px;height:6px;border-radius:0 0 3px 3px"></div>
<div class="win" style="left:69px;top:278px;width:606px;height:345px;background:#fff"><div class="pc" style="left:-70px;top:-279px">
<div class="a" style="left:70px;top:279px;width:604px;height:18px;background:#0078d4"></div>
<svg class="a" style="left:75px;top:283px" width="9" height="9" viewBox="0 0 9 9"><path d="M1 8.5 V2 Q1 0.5 2.5 0.5 H3.5 Q4.5 0.5 4.5 2 V8.5 Z" fill="#b89470"></path><rect x="4" y="3" width="1.5" height="5.5" fill="#a07a55"></rect><circle cx="6.3" cy="6.4" r="2.3" fill="#7a5232"></circle><circle cx="6.3" cy="6.4" r="0.8" fill="#d8c0a0"></circle></svg>
<div class="t" style="left: 86.8px; top: 282px; font-size: 7.5px; line-height: 12px; height: 12px; --w: 83; color: rgb(255, 255, 255); transform: scaleX(0.9346); transform-origin: 0px 0px;">Pacote / Fardo de Madeira</div>
<div class="a" style="left:603px;top:288px;width:7px;height:1px;background:#4a90d8"></div>
<div class="a" style="left:630px;top:285px;width:6.5px;height:6.5px;border:1px solid #fff;border-radius:1px"></div>
<svg class="a" style="left:657.5px;top:285px" width="7" height="7" viewBox="0 0 7 7"><path d="M0.5 0.5 L6.5 6.5 M6.5 0.5 L0.5 6.5" stroke="#fff" stroke-width="0.9"></path></svg>
<div class="t" style="left: 85.3px; top: 300.5px; font-size: 8.5px; line-height: 12px; height: 12px; --w: 29.5; font-weight: bold; color: rgb(34, 34, 34); transform: scaleX(0.9055); transform-origin: 0px 0px;">Produto</div>
<div class="t" style="left: 92.7px; top: 316.5px; font-size: 8.5px; line-height: 12px; height: 12px; --w: 27.7; color: rgb(34, 34, 34); font-weight: bold; opacity: 0.85; transform: scaleX(0.8503); transform-origin: 0px 0px;">Produto</div>
<div class="inp" style="left:133px;top:315px;width:356px;height:15px;border-color:#e6e6e6;border-bottom-color:#e6e6e6"></div>
<div class="t" style="left: 135px; top: 316px; font-size: 8.7px; line-height: 12px; height: 12px; --w: 161.6; color: rgb(58, 58, 58); transform: scaleX(0.8292); transform-origin: 0px 0px;">MADEIRA SERRADA BRUTO - ANGELIM-PEDRA</div>
<svg class="a" style="left:480.5px;top:320.0px" width="5" height="4.0" viewBox="0 0 5 4.0"><path d="M0.5 0.5 L2.5 2.5 L4.5 0.5" fill="none" stroke="#aaa" stroke-width="0.9"></path></svg>
<div class="t" style="left: 85.3px; top: 337.6px; font-size: 8.5px; line-height: 12px; height: 12px; --w: 53; font-weight: bold; color: rgb(34, 34, 34); transform: scaleX(0.9048); transform-origin: 0px 0px;">Pacote / Fardo</div>
<div class="t" style="left: 92.7px; top: 355.5px; font-size: 10px; line-height: 12px; height: 12px; --w: 31.4; color: rgb(34, 34, 34); transform: scaleX(0.8826); transform-origin: 0px 0px;">Número</div>
<div class="inp" style="left:133px;top:353px;width:89px;height:17px;border-color:#dcdcdc;border-bottom-color:#8c8c8c"></div>
<div class="t" style="left: 135px; top: 354.8px; font-size: 10.5px; line-height: 12px; height: 12px; --w: 19.6; color: rgb(34, 34, 34); transform: scaleX(0.8391); transform-origin: 0px 0px;">2727</div>
<div class="a" style="left:225px;top:353px;width:18px;height:17px;background:#e3e3e3;border:1px solid #b4b4b4;border-radius:2px"></div>
<div class="t" style="left: 229.5px; top: 354.5px; font-size: 5.5px; line-height: 12px; height: 12px; --w: 9; color: rgb(51, 51, 51); transform: scaleX(1.5568); transform-origin: 0px 0px;">•••</div>
<div class="t" style="left: 92.7px; top: 375px; font-size: 8.5px; line-height: 12px; height: 12px; --w: 29; color: rgb(102, 102, 102); transform: scaleX(0.8763); transform-origin: 0px 0px;">Situação</div>
<div class="inp" style="left:133px;top:374px;width:109px;height:14px;border-color:#e0e0e0;border-bottom-color:#e0e0e0"></div>
<div class="a" style="left:136px;top:377px;width:8px;height:7px;background:repeating-linear-gradient(180deg,#a0a0a0 0 1px,#e0e0e0 1px 2px)"></div>
<div class="t" style="left: 147.4px; top: 375px; font-size: 8.5px; line-height: 12px; height: 12px; --w: 28.7; color: rgb(102, 102, 102); transform: scaleX(0.8672); transform-origin: 0px 0px;">Fechado</div>
<div class="t" style="left: 92.7px; top: 396px; font-size: 8.5px; line-height: 12px; height: 12px; --w: 35.5; color: rgb(34, 34, 34); transform: scaleX(0.9158); transform-origin: 0px 0px;">Qualidade</div>
<div class="inp" style="left:133px;top:394px;width:67px;height:15px;border-color:#e0e0e0;border-bottom-color:#8c8c8c"></div>
<svg class="a" style="left:192.0px;top:399.0px" width="5" height="4.0" viewBox="0 0 5 4.0"><path d="M0.5 0.5 L2.5 2.5 L4.5 0.5" fill="none" stroke="#777" stroke-width="0.9"></path></svg>
<div class="t" style="left: 208px; top: 396px; font-size: 8.5px; line-height: 12px; height: 12px; --w: 31.4; color: rgb(34, 34, 34); transform: scaleX(0.8741); transform-origin: 0px 0px;">Secagem</div>
<div class="inp" style="left:244px;top:394px;width:85px;height:15px;border-color:#e0e0e0;border-bottom-color:#8c8c8c"></div>
<svg class="a" style="left:322.0px;top:399.0px" width="5" height="4.0" viewBox="0 0 5 4.0"><path d="M0.5 0.5 L2.5 2.5 L4.5 0.5" fill="none" stroke="#777" stroke-width="0.9"></path></svg>
<div class="t" style="left: 289px; top: 337.7px; font-size: 8.5px; line-height: 12px; height: 12px; --w: 76.6; font-weight: bold; color: rgb(34, 34, 34); transform: scaleX(0.9162); transform-origin: 0px 0px;">Origem / Fornecedor</div>
<div class="t" style="left: 297.5px; top: 355.5px; font-size: 8.5px; line-height: 12px; height: 12px; --w: 28.3; color: rgb(34, 34, 34); transform: scaleX(0.936); transform-origin: 0px 0px;">Número</div>
<div class="inp" style="left:357px;top:353px;width:75px;height:15px;border-color:#dcdcdc;border-bottom-color:#8c8c8c"></div>
<div class="t" style="left: 297.5px; top: 374.5px; font-size: 8.5px; line-height: 12px; height: 12px; --w: 48.5; color: rgb(34, 34, 34); transform: scaleX(0.9164); transform-origin: 0px 0px;">Complemento</div>
<div class="inp" style="left:357px;top:372px;width:46px;height:15px;border-color:#dcdcdc;border-bottom-color:#8c8c8c"></div>
<div class="a" style="left:457px;top:357px;width:8px;height:8px;border:1px solid #666;border-radius:1.5px;background:#fff"></div>
<div class="t" style="left: 467px; top: 355.3px; font-size: 8.5px; line-height: 12px; height: 12px; --w: 72; color: rgb(34, 34, 34); transform: scaleX(0.9019); transform-origin: 0px 0px;">Com certificação CW</div>
<div class="t" style="left: 461.5px; top: 373.7px; font-size: 8.5px; line-height: 12px; height: 12px; --w: 39.8; color: rgb(34, 34, 34); transform: scaleX(0.9156); transform-origin: 0px 0px;">Código CW</div>
<div class="inp" style="left:505px;top:372px;width:92px;height:15px;border-color:#e0e0e0;border-bottom-color:#e0e0e0"></div>
<div class="t" style="left: 335.9px; top: 396.3px; font-size: 8.5px; line-height: 12px; height: 12px; --w: 46.6; color: rgb(34, 34, 34); transform: scaleX(0.8887); transform-origin: 0px 0px;">Característica</div>
<div class="inp" style="left:386px;top:394px;width:103px;height:15px;border-color:#e0e0e0;border-bottom-color:#8c8c8c"></div>
<svg class="a" style="left:482.2px;top:399.0px" width="5" height="4.0" viewBox="0 0 5 4.0"><path d="M0.5 0.5 L2.5 2.5 L4.5 0.5" fill="none" stroke="#777" stroke-width="0.9"></path></svg>
<div class="t" style="left: 493.7px; top: 396px; font-size: 8.5px; line-height: 12px; height: 12px; --w: 34.6; color: rgb(34, 34, 34); transform: scaleX(0.9038); transform-origin: 0px 0px;">Usinagem</div>
<div class="inp" style="left:532px;top:394px;width:133px;height:15px;border-color:#e0e0e0;border-bottom-color:#8c8c8c"></div>
<svg class="a" style="left:656.8px;top:399.0px" width="5" height="4.0" viewBox="0 0 5 4.0"><path d="M0.5 0.5 L2.5 2.5 L4.5 0.5" fill="none" stroke="#777" stroke-width="0.9"></path></svg>
<div class="t" style="left: 85.3px; top: 417.8px; font-size: 8.5px; line-height: 12px; height: 12px; --w: 83.5; font-weight: bold; color: rgb(34, 34, 34); transform: scaleX(0.9207); transform-origin: 0px 0px;">Itens do pacote / fardo</div>
<div class="a" style="left:83px;top:432px;width:582px;height:55px;background:#ebebeb"></div>
<div class="t" style="left: 93px; top: 433.8px; font-size: 8.5px; line-height: 12px; height: 12px; --w: 14.7; color: rgb(34, 34, 34); transform: scaleX(0.8892); transform-origin: 0px 0px;">Item</div>
<div class="t" style="left: 141px; top: 434px; font-size: 8.5px; line-height: 12px; height: 12px; --w: 51.7; color: rgb(34, 34, 34); transform: scaleX(0.8687); transform-origin: 0px 0px;">Espessura (cm)</div>
<div class="t" style="left: 212px; top: 434px; font-size: 8.5px; line-height: 12px; height: 12px; --w: 44; color: rgb(34, 34, 34); transform: scaleX(0.9043); transform-origin: 0px 0px;">Largura (cm)</div>
<div class="t" style="left: 283.8px; top: 434.5px; font-size: 8.5px; line-height: 12px; height: 12px; --w: 65; color: rgb(34, 34, 34); transform: scaleX(0.9236); transform-origin: 0px 0px;">Comprimento (cm)</div>
<div class="t" style="left: 361px; top: 434.5px; font-size: 8.5px; line-height: 12px; height: 12px; --w: 39.4; color: rgb(34, 34, 34); transform: scaleX(0.887); transform-origin: 0px 0px;">Qtde Peças</div>
<div class="t" style="left: 424.3px; top: 434.5px; font-size: 8.5px; line-height: 12px; height: 12px; --w: 47.2; color: rgb(34, 34, 34); transform: scaleX(0.9001); transform-origin: 0px 0px;">Volume (cm3)</div>
<div class="a" style="left:93px;top:448px;width:38px;height:15px;background:#fff"></div>
<div class="t" style="left: 96px; top: 450px; font-size: 10px; line-height: 12px; height: 12px; --w: 4.5; color: rgb(34, 34, 34); transform: scaleX(0.809); transform-origin: 0px 0px;">1</div>
<div class="a" style="left:141px;top:448px;width:58px;height:15px;background:#fff"></div>
<div class="t" style="left: 142.2px; top: 450px; font-size: 10px; line-height: 12px; height: 12px; --w: 10.5; color: rgb(34, 34, 34); transform: scaleX(0.7551); transform-origin: 0px 0px;">2,5</div>
<svg class="a" style="left:191.5px;top:454.0px" width="5" height="4.0" viewBox="0 0 5 4.0"><path d="M0.5 0.5 L2.5 2.5 L4.5 0.5" fill="none" stroke="#888" stroke-width="0.9"></path></svg>
<div class="a" style="left:210px;top:448px;width:61px;height:15px;background:#fff"></div>
<div class="t" style="left: 212.6px; top: 450px; font-size: 10px; line-height: 12px; height: 12px; --w: 10.5; color: rgb(34, 34, 34); transform: scaleX(0.7551); transform-origin: 0px 0px;">8,5</div>
<svg class="a" style="left:263.0px;top:454.0px" width="5" height="4.0" viewBox="0 0 5 4.0"><path d="M0.5 0.5 L2.5 2.5 L4.5 0.5" fill="none" stroke="#888" stroke-width="0.9"></path></svg>
<div class="a" style="left:283px;top:448px;width:60px;height:15px;background:#fff"></div>
<div class="t" style="left: 284.5px; top: 450px; font-size: 10px; line-height: 12px; height: 12px; --w: 14; color: rgb(34, 34, 34); transform: scaleX(0.839); transform-origin: 0px 0px;">180</div>
<svg class="a" style="left:335.0px;top:454.0px" width="5" height="4.0" viewBox="0 0 5 4.0"><path d="M0.5 0.5 L2.5 2.5 L4.5 0.5" fill="none" stroke="#888" stroke-width="0.9"></path></svg>
<div class="a" style="left:361px;top:448px;width:50px;height:16px;background:#fff;border-bottom:2px solid #0a6cc8"></div>
<div class="t" style="left: 362.5px; top: 450.3px; font-size: 10px; line-height: 12px; height: 12px; --w: 10.5; color: rgb(34, 34, 34); transform: scaleX(0.9438); transform-origin: 0px 0px;">30</div>
<svg class="a" style="left:401px;top:448.5px" width="9" height="14" viewBox="0 0 9 14"><rect x="0.5" y="0.5" width="8" height="5.5" fill="#fff" stroke="#e0e0e0" stroke-width="1"></rect><rect x="0.5" y="7.5" width="8" height="5.5" fill="#fff" stroke="#e0e0e0" stroke-width="1"></rect><path d="M2.5 4.3 L4.5 2.3 L6.5 4.3 Z M2.5 9.2 L4.5 11.2 L6.5 9.2 Z" fill="#222"></path></svg>
<div class="a" style="left:425px;top:448px;width:78px;height:15px;background:#fff"></div>
<div class="t" style="left: 426.4px; top: 450px; font-size: 10px; line-height: 12px; height: 12px; --w: 44.6; color: rgb(102, 102, 102); transform: scaleX(0.8561); transform-origin: 0px 0px;">114750,000</div>
<svg class="a" style="left:495.5px;top:454.0px" width="5" height="4.0" viewBox="0 0 5 4.0"><path d="M0.5 0.5 L2.5 2.5 L4.5 0.5" fill="none" stroke="#bbb" stroke-width="0.9"></path></svg>
<div class="t" style="left: 142px; top: 467.8px; font-size: 8px; line-height: 12px; height: 12px; --w: 246; color: rgb(153, 153, 153); font-weight: bold; transform: scaleX(0.9442); transform-origin: 0px 0px;">Repetir: (F5) Espessura | (F6) Largura | (F7) Comprimento | (F8) Qtde</div>
<div class="btn" style="left:548px;top:442px;width:80px;height:21px;border-radius:1px;border-color:#dcdcdc"></div>
<svg class="a" style="left:562px;top:450px" width="10" height="8" viewBox="0 0 10 8"><path d="M0.8 4 L3.6 6.8 L9.2 0.8" fill="none" stroke="#3a9a78" stroke-width="0.9"></path></svg>
<div class="t" style="left: 576.6px; top: 448.2px; font-size: 10px; line-height: 12px; height: 12px; --w: 35.4; color: rgb(34, 34, 34); transform: scaleX(0.9099); transform-origin: 0px 0px;">Atualizar</div>
<div class="btn" style="left:631px;top:442px;width:25px;height:21px;border-radius:1px;border-color:#dcdcdc"></div>
<svg class="a" style="left:638.5px;top:448.5px" width="10" height="10" viewBox="0 0 10 10"><path d="M0.5 0.5 L9.5 9.5 M9.5 0.5 L0.5 9.5" stroke="#555" stroke-width="0.8"></path></svg>
<svg class="a" style="left:642px;top:467.8px" width="11" height="11" viewBox="0 0 11 11"><circle cx="5.5" cy="5.5" r="2.9" fill="none" stroke="#505050" stroke-width="0.9"></circle><rect x="4.8" y="1.2" width="1.4" height="1.5" fill="#505050" transform="rotate(0 5.5 5.5)"></rect><rect x="4.8" y="1.2" width="1.4" height="1.5" fill="#505050" transform="rotate(45 5.5 5.5)"></rect><rect x="4.8" y="1.2" width="1.4" height="1.5" fill="#505050" transform="rotate(90 5.5 5.5)"></rect><rect x="4.8" y="1.2" width="1.4" height="1.5" fill="#505050" transform="rotate(135 5.5 5.5)"></rect><rect x="4.8" y="1.2" width="1.4" height="1.5" fill="#505050" transform="rotate(180 5.5 5.5)"></rect><rect x="4.8" y="1.2" width="1.4" height="1.5" fill="#505050" transform="rotate(225 5.5 5.5)"></rect><rect x="4.8" y="1.2" width="1.4" height="1.5" fill="#505050" transform="rotate(270 5.5 5.5)"></rect><rect x="4.8" y="1.2" width="1.4" height="1.5" fill="#505050" transform="rotate(315 5.5 5.5)"></rect><circle cx="5.5" cy="5.5" r="1.1" fill="none" stroke="#666" stroke-width="0.7"></circle></svg>
<div class="a" style="left:81px;top:487px;width:586px;height:101px;border:1px solid #a8a8a8;background:#fff"></div>
<div class="a" style="left:196px;top:488px;width:1px;height:28px;background:#e4e4e4"></div>
<div class="a" style="left:500.5px;top:488px;width:1px;height:28px;background:#e4e4e4"></div>
<div class="a" style="left:121.6px;top:502px;width:1px;height:14px;background:#e8e8e8"></div>
<div class="a" style="left:240.6px;top:502px;width:1px;height:14px;background:#e8e8e8"></div>
<div class="a" style="left:284.5px;top:502px;width:1px;height:14px;background:#e8e8e8"></div>
<div class="a" style="left:329px;top:502px;width:1px;height:14px;background:#e8e8e8"></div>
<div class="a" style="left:374.5px;top:502px;width:1px;height:14px;background:#e8e8e8"></div>
<div class="a" style="left:419px;top:502px;width:1px;height:14px;background:#e8e8e8"></div>
<div class="a" style="left:542.3px;top:502px;width:1px;height:14px;background:#e8e8e8"></div>
<div class="a" style="left:583.3px;top:502px;width:1px;height:14px;background:#e8e8e8"></div>
<div class="a" style="left:624.5px;top:502px;width:1px;height:14px;background:#e8e8e8"></div>
<div class="t" style="left: 325.75px; top: 489.3px; font-size: 8.5px; line-height: 12px; height: 12px; --w: 46.5; color: rgb(51, 51, 51); transform: scaleX(0.895); transform-origin: 0px 0px;">Florestal (cm)</div>
<div class="t" style="left: 557.5px; top: 490px; font-size: 8.5px; line-height: 12px; height: 12px; --w: 52; color: rgb(51, 51, 51); transform: scaleX(0.9024); transform-origin: 0px 0px;">Comercial (cm)</div>
<div class="t" style="left: 94px; top: 503.8px; font-size: 8.5px; line-height: 12px; height: 12px; --w: 15.4; color: rgb(51, 51, 51); transform: scaleX(0.9316); transform-origin: 0px 0px;">Item</div>
<div class="t" style="left: 143.05px; top: 503.8px; font-size: 8.5px; line-height: 12px; height: 12px; --w: 32.3; color: rgb(51, 51, 51); transform: scaleX(0.9491); transform-origin: 0px 0px;">Qtde pçs</div>
<div class="t" style="left: 201.35px; top: 503.8px; font-size: 8.5px; line-height: 12px; height: 12px; --w: 35.3; color: rgb(51, 51, 51); transform: scaleX(0.8787); transform-origin: 0px 0px;">Espessura</div>
<div class="t" style="left: 249.15px; top: 503.8px; font-size: 8.5px; line-height: 12px; height: 12px; --w: 27.3; color: rgb(51, 51, 51); transform: scaleX(0.9313); transform-origin: 0px 0px;">Largura</div>
<div class="t" style="left: 295.9px; top: 503.8px; font-size: 8.5px; line-height: 12px; height: 12px; --w: 23; color: rgb(51, 51, 51); transform: scaleX(0.9183); transform-origin: 0px 0px;">Comp.</div>
<div class="t" style="left: 336.8px; top: 503.8px; font-size: 8.5px; line-height: 12px; height: 12px; --w: 31.2; color: rgb(51, 51, 51); transform: scaleX(0.8689); transform-origin: 0px 0px;">Vol.(cm3)</div>
<div class="t" style="left: 382.8px; top: 503.8px; font-size: 8.5px; line-height: 12px; height: 12px; --w: 28.2; color: rgb(51, 51, 51); transform: scaleX(0.8908); transform-origin: 0px 0px;">Vol.(m3)</div>
<div class="t" style="left: 421.8px; top: 503.8px; font-size: 8.5px; line-height: 12px; height: 12px; --w: 33; color: rgb(51, 51, 51); transform: scaleX(0.8731); transform-origin: 0px 0px;">Descricao</div>
<div class="t" style="left: 504px; top: 503.8px; font-size: 8.5px; line-height: 12px; height: 12px; --w: 35; color: rgb(51, 51, 51); transform: scaleX(0.8713); transform-origin: 0px 0px;">Espessura</div>
<div class="t" style="left: 549.6px; top: 503.8px; font-size: 8.5px; line-height: 12px; height: 12px; --w: 26.8; color: rgb(51, 51, 51); transform: scaleX(0.9143); transform-origin: 0px 0px;">Largura</div>
<div class="t" style="left: 592.6px; top: 503.8px; font-size: 8.5px; line-height: 12px; height: 12px; --w: 23; color: rgb(51, 51, 51); transform: scaleX(0.9183); transform-origin: 0px 0px;">Comp.</div>
<div class="t" style="left: 631.8px; top: 503.8px; font-size: 8.5px; line-height: 12px; height: 12px; --w: 27.5; color: rgb(51, 51, 51); transform: scaleX(0.8687); transform-origin: 0px 0px;">Vol.(m3)</div>
<div class="a" style="left:122px;top:516px;width:544px;height:13px;background:#ececec"></div>
<div class="a" style="left:82px;top:528.5px;width:584px;height:1px;background:#f0f0f0"></div>
<div class="t" style="left: 99.95px; top: 517px; font-size: 8.5px; line-height: 12px; height: 12px; --w: 3.5; color: rgb(51, 51, 51); transform: scaleX(0.7393); transform-origin: 0px 0px;">1</div>
<div class="t" style="left: 154.7px; top: 517px; font-size: 8.5px; line-height: 12px; height: 12px; --w: 9; color: rgb(51, 51, 51); transform: scaleX(0.9505); transform-origin: 0px 0px;">30</div>
<div class="t" style="left: 214px; top: 517px; font-size: 8.5px; line-height: 12px; height: 12px; --w: 10; color: rgb(51, 51, 51); transform: scaleX(0.8454); transform-origin: 0px 0px;">2,5</div>
<div class="t" style="left: 257.8px; top: 517px; font-size: 8.5px; line-height: 12px; height: 12px; --w: 10; color: rgb(51, 51, 51); transform: scaleX(0.8454); transform-origin: 0px 0px;">8,5</div>
<div class="t" style="left: 300.9px; top: 517px; font-size: 8.5px; line-height: 12px; height: 12px; --w: 13; color: rgb(51, 51, 51); transform: scaleX(0.9163); transform-origin: 0px 0px;">180</div>
<div class="t" style="left: 333px; top: 517px; font-size: 8.5px; line-height: 12px; height: 12px; --w: 39.7; color: rgb(51, 51, 51); transform: scaleX(0.8965); transform-origin: 0px 0px;">114750,000</div>
<div class="t" style="left: 388.3px; top: 517px; font-size: 8.5px; line-height: 12px; height: 12px; --w: 18.4; color: rgb(51, 51, 51); transform: scaleX(0.8914); transform-origin: 0px 0px;">0,114</div>
<div class="t" style="left: 420.6px; top: 517px; font-size: 8.5px; line-height: 12px; height: 12px; --w: 25.7; color: rgb(51, 51, 51); transform: scaleX(0.922); transform-origin: 0px 0px;">Sarrafo</div>
<div class="t" style="left: 516.5px; top: 517px; font-size: 8.5px; line-height: 12px; height: 12px; --w: 10; color: rgb(51, 51, 51); transform: scaleX(0.8454); transform-origin: 0px 0px;">2,5</div>
<div class="t" style="left: 558px; top: 517px; font-size: 8.5px; line-height: 12px; height: 12px; --w: 10; color: rgb(51, 51, 51); transform: scaleX(0.8454); transform-origin: 0px 0px;">8,5</div>
<div class="t" style="left: 597.6px; top: 517px; font-size: 8.5px; line-height: 12px; height: 12px; --w: 13; color: rgb(51, 51, 51); transform: scaleX(0.9163); transform-origin: 0px 0px;">180</div>
<div class="t" style="left: 636.6px; top: 517px; font-size: 8.5px; line-height: 12px; height: 12px; --w: 18.4; color: rgb(51, 51, 51); transform: scaleX(0.8914); transform-origin: 0px 0px;">0,114</div>
<div class="a" style="left:82px;top:541.5px;width:584px;height:1px;background:#f0f0f0"></div>
<div class="t" style="left: 99.45px; top: 530.1px; font-size: 8.5px; line-height: 12px; height: 12px; --w: 4.5; color: rgb(51, 51, 51); transform: scaleX(0.9505); transform-origin: 0px 0px;">2</div>
<div class="t" style="left: 154.7px; top: 530.1px; font-size: 8.5px; line-height: 12px; height: 12px; --w: 9; color: rgb(51, 51, 51); transform: scaleX(0.9505); transform-origin: 0px 0px;">22</div>
<div class="t" style="left: 214px; top: 530.1px; font-size: 8.5px; line-height: 12px; height: 12px; --w: 10; color: rgb(51, 51, 51); transform: scaleX(0.8454); transform-origin: 0px 0px;">2,5</div>
<div class="t" style="left: 257.8px; top: 530.1px; font-size: 8.5px; line-height: 12px; height: 12px; --w: 10; color: rgb(51, 51, 51); transform: scaleX(0.8454); transform-origin: 0px 0px;">2,5</div>
<div class="t" style="left: 300.9px; top: 530.1px; font-size: 8.5px; line-height: 12px; height: 12px; --w: 13; color: rgb(51, 51, 51); transform: scaleX(0.9163); transform-origin: 0px 0px;">200</div>
<div class="t" style="left: 337.7px; top: 530.1px; font-size: 8.5px; line-height: 12px; height: 12px; --w: 35; color: rgb(51, 51, 51); transform: scaleX(0.8709); transform-origin: 0px 0px;">27500,000</div>
<div class="t" style="left: 388.3px; top: 530.1px; font-size: 8.5px; line-height: 12px; height: 12px; --w: 18.4; color: rgb(51, 51, 51); transform: scaleX(0.8646); transform-origin: 0px 0px;">0,027</div>
<div class="t" style="left: 420.6px; top: 530.1px; font-size: 8.5px; line-height: 12px; height: 12px; --w: 25.7; color: rgb(51, 51, 51); transform: scaleX(0.922); transform-origin: 0px 0px;">Sarrafo</div>
<div class="t" style="left: 516.5px; top: 530.1px; font-size: 8.5px; line-height: 12px; height: 12px; --w: 10; color: rgb(51, 51, 51); transform: scaleX(0.8454); transform-origin: 0px 0px;">2,5</div>
<div class="t" style="left: 558px; top: 530.1px; font-size: 8.5px; line-height: 12px; height: 12px; --w: 10; color: rgb(51, 51, 51); transform: scaleX(0.8454); transform-origin: 0px 0px;">2,5</div>
<div class="t" style="left: 597.6px; top: 530.1px; font-size: 8.5px; line-height: 12px; height: 12px; --w: 13; color: rgb(51, 51, 51); transform: scaleX(0.9163); transform-origin: 0px 0px;">200</div>
<div class="t" style="left: 636.6px; top: 530.1px; font-size: 8.5px; line-height: 12px; height: 12px; --w: 18.4; color: rgb(51, 51, 51); transform: scaleX(0.8646); transform-origin: 0px 0px;">0,027</div>
<div class="a" style="left:82px;top:554.5px;width:584px;height:1px;background:#f0f0f0"></div>
<div class="t" style="left: 99.45px; top: 543.2px; font-size: 8.5px; line-height: 12px; height: 12px; --w: 4.5; color: rgb(51, 51, 51); transform: scaleX(0.9505); transform-origin: 0px 0px;">3</div>
<div class="t" style="left: 154.7px; top: 543.2px; font-size: 8.5px; line-height: 12px; height: 12px; --w: 9; color: rgb(51, 51, 51); transform: scaleX(0.9505); transform-origin: 0px 0px;">50</div>
<div class="t" style="left: 216.75px; top: 543.2px; font-size: 8.5px; line-height: 12px; height: 12px; --w: 4.5; color: rgb(51, 51, 51); transform: scaleX(0.9505); transform-origin: 0px 0px;">4</div>
<div class="t" style="left: 258.8px; top: 543.2px; font-size: 8.5px; line-height: 12px; height: 12px; --w: 8; color: rgb(51, 51, 51); transform: scaleX(0.8449); transform-origin: 0px 0px;">12</div>
<div class="t" style="left: 300.9px; top: 543.2px; font-size: 8.5px; line-height: 12px; height: 12px; --w: 13; color: rgb(51, 51, 51); transform: scaleX(0.9163); transform-origin: 0px 0px;">210</div>
<div class="t" style="left: 333px; top: 543.2px; font-size: 8.5px; line-height: 12px; height: 12px; --w: 39.7; color: rgb(51, 51, 51); transform: scaleX(0.8838); transform-origin: 0px 0px;">504000,000</div>
<div class="t" style="left: 388.3px; top: 543.2px; font-size: 8.5px; line-height: 12px; height: 12px; --w: 18.4; color: rgb(51, 51, 51); transform: scaleX(0.8646); transform-origin: 0px 0px;">0,504</div>
<div class="t" style="left: 420.6px; top: 543.2px; font-size: 8.5px; line-height: 12px; height: 12px; --w: 15.3; color: rgb(51, 51, 51); transform: scaleX(0.9075); transform-origin: 0px 0px;">Viga</div>
<div class="t" style="left: 519.25px; top: 543.2px; font-size: 8.5px; line-height: 12px; height: 12px; --w: 4.5; color: rgb(51, 51, 51); transform: scaleX(0.9505); transform-origin: 0px 0px;">4</div>
<div class="t" style="left: 559px; top: 543.2px; font-size: 8.5px; line-height: 12px; height: 12px; --w: 8; color: rgb(51, 51, 51); transform: scaleX(0.8449); transform-origin: 0px 0px;">12</div>
<div class="t" style="left: 597.6px; top: 543.2px; font-size: 8.5px; line-height: 12px; height: 12px; --w: 13; color: rgb(51, 51, 51); transform: scaleX(0.9163); transform-origin: 0px 0px;">210</div>
<div class="t" style="left: 636.6px; top: 543.2px; font-size: 8.5px; line-height: 12px; height: 12px; --w: 18.4; color: rgb(51, 51, 51); transform: scaleX(0.8646); transform-origin: 0px 0px;">0,504</div>
<div class="a" style="left:82px;top:571px;width:584px;height:16px;background:#f0f0f0;border-top:1px solid #a0a0a0"></div>
<div class="a" style="left:82px;top:572px;width:40px;height:15px;background:#e4e6e8"></div>
<div class="a" style="left:122px;top:572px;width:74px;height:15px;background:#e4e6e8"></div>
<div class="a" style="left:375px;top:572px;width:44px;height:15px;background:#e4e6e8"></div>
<div class="a" style="left:625.5px;top:572px;width:40.5px;height:15px;background:#e4e6e8"></div>
<div class="a" style="left:121.6px;top:572px;width:1px;height:15px;background:#d8d8d8"></div>
<div class="t" style="left: 99.55px; top: 573.7px; font-size: 8.5px; line-height: 12px; height: 12px; --w: 4.5; color: rgb(51, 51, 51); transform: scaleX(0.9505); transform-origin: 0px 0px;">3</div>
<div class="t" style="left: 153.5px; top: 573.7px; font-size: 8.5px; line-height: 12px; height: 12px; --w: 12; color: rgb(51, 51, 51); transform: scaleX(0.8458); transform-origin: 0px 0px;">102</div>
<div class="t" style="left: 387.5px; top: 573.7px; font-size: 8.5px; line-height: 12px; height: 12px; --w: 19; color: rgb(51, 51, 51); transform: scaleX(0.8928); transform-origin: 0px 0px;">0,645</div>
<div class="t" style="left: 636px; top: 574px; font-size: 8.5px; line-height: 12px; height: 12px; --w: 18.4; color: rgb(51, 51, 51); transform: scaleX(0.8646); transform-origin: 0px 0px;">0,645</div>
<div class="a" style="left:70px;top:593px;width:604px;height:28px;background:#ebebeb"></div>
<div class="a" style="left:85px;top:600px;width:76px;height:15px;background:#e6e6e6;border:1px solid #c8c8c8;border-radius:2px"></div>
<div class="a" style="left:165px;top:600px;width:56px;height:15px;background:#e6e6e6;border:1px solid #c8c8c8;border-radius:2px"></div>
<div class="a" style="left:225px;top:600px;width:63px;height:15px;background:#e6e6e6;border:1px solid #c8c8c8;border-radius:2px"></div>
<svg class="a" style="left:89px;top:603px" width="11" height="10" viewBox="0 0 11 10"><rect x="2" y="2" width="7" height="6" fill="none" stroke="#444" stroke-width="0.9"></rect><path d="M0.5 0.5 L2.5 2.5 M10.5 0.5 L8.5 2.5 M0.5 9.5 L2.5 7.5 M10.5 9.5 L8.5 7.5" stroke="#444" stroke-width="0.9"></path></svg>
<div class="t" style="left: 104.8px; top: 602px; font-size: 8.5px; line-height: 12px; height: 12px; --w: 49.4; color: rgb(34, 34, 34); transform: scaleX(0.9418); transform-origin: 0px 0px;">Aplicar Abono</div>
<svg class="a" style="left:167px;top:604px" width="10" height="7" viewBox="0 0 10 7"><rect x="0.5" y="0.5" width="9" height="6" rx="1" fill="none" stroke="#444" stroke-width="0.9"></rect><line x1="2" y1="4" x2="8" y2="4" stroke="#888" stroke-width="0.8"></line></svg>
<div class="t" style="left: 182.2px; top: 602px; font-size: 8.5px; line-height: 12px; height: 12px; --w: 34.5; color: rgb(34, 34, 34); transform: scaleX(0.9012); transform-origin: 0px 0px;">Etiqueta 1</div>
<svg class="a" style="left:231px;top:602px" width="8" height="11" viewBox="0 0 8 11"><path d="M0.5 0.5 H5 L7.5 3 V10.5 H0.5 Z" fill="#fff" stroke="#333" stroke-width="0.9"></path></svg>
<div class="t" style="left: 245.5px; top: 602px; font-size: 8.5px; line-height: 12px; height: 12px; --w: 34.8; color: rgb(34, 34, 34); transform: scaleX(0.9091); transform-origin: 0px 0px;">Etiqueta 2</div>
<div class="btn" style="left:545px;top:600px;width:58px;height:15px;border-radius:2px"></div>
<div class="t" style="left: 568.5px; top: 601.6px; font-size: 8.5px; line-height: 12px; height: 12px; --w: 10.3; color: rgb(34, 34, 34); transform: scaleX(0.8387); transform-origin: 0px 0px;">OK</div>
<div class="btn" style="left:608.5px;top:600px;width:58.0px;height:15px;border-radius:2px"></div>
<div class="t" style="left: 622.5px; top: 601.6px; font-size: 8.5px; line-height: 12px; height: 12px; --w: 29.5; color: rgb(34, 34, 34); transform: scaleX(0.8669); transform-origin: 0px 0px;">Cancelar</div>
</div></div>
</body></html>
